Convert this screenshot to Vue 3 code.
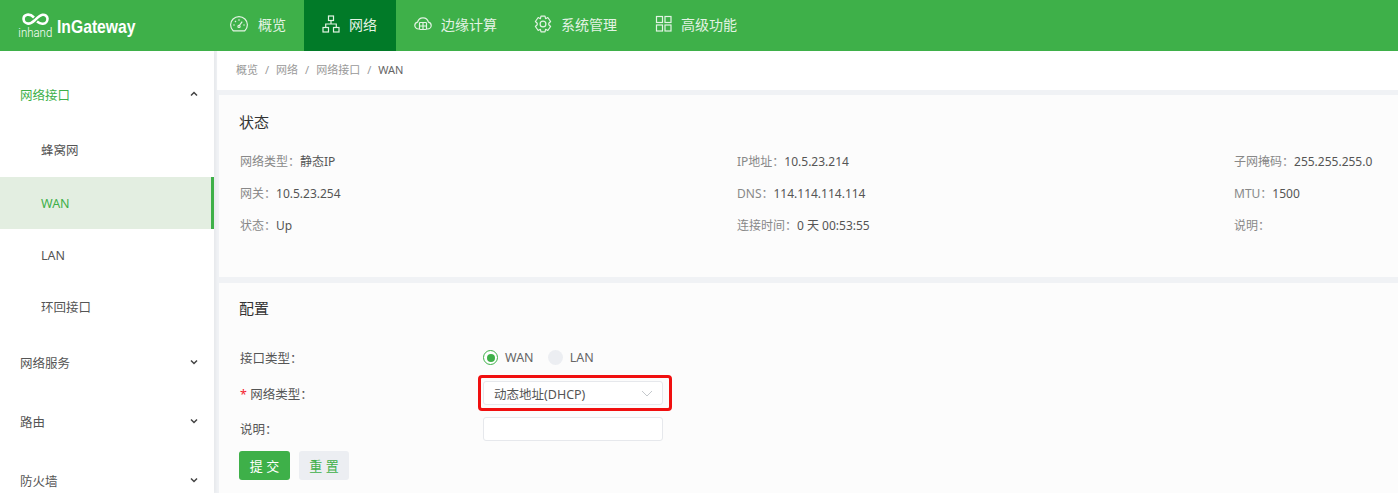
<script setup>
const nav = [
  { label: '概览', icon: 'gauge' },
  { label: '网络', icon: 'net', active: true },
  { label: '边缘计算', icon: 'cloud' },
  { label: '系统管理', icon: 'gear' },
  { label: '高级功能', icon: 'grid' },
]

const subItems = [
  { label: '蜂窝网' },
  { label: 'WAN', active: true },
  { label: 'LAN' },
  { label: '环回接口' },
]

const groups = ['网络服务', '路由', '防火墙']

const status = [
  ['网络类型：', '静态IP'],
  ['IP地址：', '10.5.23.214'],
  ['子网掩码：', '255.255.255.0'],
  ['网关：', '10.5.23.254'],
  ['DNS：', '114.114.114.114'],
  ['MTU：', '1500'],
  ['状态：', 'Up'],
  ['连接时间：', '0 天 00:53:55'],
  ['说明：', ''],
]
</script>

<template>
  <div class="page">
    <header class="top">
      <div class="logo">
        <div class="logo-mark">
          <svg width="27" height="13" viewBox="0 0 27 13" fill="none" stroke="#fff" stroke-width="2.600">
            <path d="M12 4.500 C9.500 2 7 1.400 5 1.800 C2.600 2.300 1.400 4.300 1.600 6.300 C1.800 8.800 4 10.400 6 10.600 C8 10.800 10 9.800 12.500 7.500 C15 5.200 17.500 2.400 20.500 1.800 C23 1.400 25.400 3 25.500 5.600 C25.600 8.200 23.600 10.400 21 10.700 C19 11 17 10.200 15 8.600" />
          </svg>
          <span class="logo-small">inhand</span>
        </div>
        <span class="logo-name">InGateway</span>
      </div>
      <nav class="nav">
        <div v-for="n in nav" :key="n.label" class="nav-item" :class="[n.icon, { active: n.active }]">
          <svg width="18" height="18" viewBox="0 0 18 18" fill="none" stroke="currentColor" stroke-width="1.200">
            <template v-if="n.icon == 'gauge'">
              <path d="M3.200 15.800 C1.600 14.300 .6 12.200 .6 9.800 C.6 5.200 4.400 1.600 9 1.600 C13.600 1.600 17.400 5.200 17.400 9.800 C17.400 12.200 16.400 14.300 14.800 15.800 Z" stroke-linejoin="round" />
              <path d="M9 11 L12.200 6.600 M3.200 10 H4.800 M13.200 10 H14.800 M9 4.200 V5.800 M4.900 5.900 L6 7" />
              <circle cx="9" cy="11.400" r="1.100" />
            </template>
            <template v-else-if="n.icon == 'net'">
              <rect x="6.500" y="1" width="5" height="4.500" />
              <rect x="1" y="12.500" width="5.500" height="4.500" />
              <rect x="11.500" y="12.500" width="5.500" height="4.500" />
              <path d="M9 5.500 V9 M3.700 12.500 V9 H14.300 V12.500" />
            </template>
            <template v-else-if="n.icon == 'cloud'">
              <path d="M5 14 H4.500 C2.300 14 .8 12.300 .8 10.500 C.8 8.700 2 7.400 3.600 7.100 C4.200 4.500 6.400 2.800 9 2.800 C11.600 2.800 13.800 4.500 14.400 7.100 C16 7.400 17.200 8.700 17.200 10.500 C17.200 12.300 15.700 14 13.500 14 H13" />
              <rect x="5.500" y="7.500" width="7" height="7" rx=".8" />
              <path d="M5.500 11 H12.500 M9 7.500 V14.500" />
            </template>
            <template v-else-if="n.icon == 'gear'">
              <path d="M7 1.200 H11 L11.600 3.700 L13.800 2.500 L16.600 6.500 L14.800 8.200 V9.800 L16.600 11.500 L13.800 15.500 L11.600 14.300 L11 16.800 H7 L6.400 14.300 L4.200 15.500 L1.400 11.500 L3.200 9.800 V8.200 L1.400 6.500 L4.200 2.500 L6.400 3.700 Z" stroke-linejoin="round" />
              <circle cx="9" cy="9" r="2.900" />
            </template>
            <template v-else>
              <rect x="2.500" y="1.500" width="6" height="6" />
              <rect x="11" y="1.500" width="6" height="6" />
              <rect x="2.500" y="10" width="6" height="6" />
              <rect x="11" y="10" width="6" height="6" />
            </template>
          </svg>
          <span>{{ n.label }}</span>
        </div>
      </nav>
    </header>

    <div class="body">
      <aside class="side">
        <div class="group open">
          <span>网络接口</span>
          <svg class="chev" width="8" height="6" viewBox="0 0 8 6" fill="none" stroke="#444" stroke-width="1.500"><path d="M1 4.500 L4 1.500 L7 4.500" /></svg>
        </div>
        <div v-for="s in subItems" :key="s.label" class="sub" :class="{ active: s.active }">{{ s.label }}</div>
        <div v-for="g in groups" :key="g" class="group">
          <span>{{ g }}</span>
          <svg class="chev" width="8" height="6" viewBox="0 0 8 6" fill="none" stroke="#444" stroke-width="1.500"><path d="M1 1.500 L4 4.500 L7 1.500" /></svg>
        </div>
      </aside>

      <main class="main">
        <div class="crumbs">
          <span>概览</span><i>/</i><span>网络</span><i>/</i><span>网络接口</span><i>/</i><span class="last">WAN</span>
        </div>

        <section class="card status">
          <h3>状态</h3>
          <div class="status-grid">
            <div v-for="s in status" :key="s[0]" class="cell">
              <span class="k">{{ s[0] }}</span><span class="v">{{ s[1] }}</span>
            </div>
          </div>
        </section>

        <section class="card config">
          <h3>配置</h3>
          <div class="row first">
            <label>接口类型：</label>
            <div class="radios">
              <span class="radio on"></span><span class="radio-text">WAN</span>
              <span class="radio"></span><span class="radio-text">LAN</span>
            </div>
          </div>
          <div class="row">
            <label><em>*</em> 网络类型：</label>
            <div class="select">
              <span>动态地址(DHCP)</span>
              <svg width="12" height="7" viewBox="0 0 12 7" fill="none" stroke="#c4c8cc" stroke-width="1"><path d="M1 1 L6 6 L11 1" /></svg>
              <div class="mark"></div>
            </div>
          </div>
          <div class="row">
            <label>说明：</label>
            <div class="input"></div>
          </div>
          <div class="buttons">
            <button class="btn primary">提 交</button>
            <button class="btn plain">重 置</button>
          </div>
        </section>
      </main>
    </div>
  </div>
</template>

<style>
html, body {
  margin: 0;
  overflow: hidden;
}
</style>

<style scoped>
.page {
  width: 1398px;
  height: 493px;
  overflow: hidden;
  background: #f0f2f5;
  font-family: "Noto Sans", "Noto Sans CJK SC", sans-serif;
  font-size: 12px;
  color: #555;
}

.top {
  height: 51px;
  background: #3eb049;
  display: flex;
  position: relative;
  z-index: 2;
}

.logo {
  width: 229px;
  box-sizing: border-box;
  padding: 13px 0 0 19px;
  display: flex;
  color: #fff;
}

.logo-mark {
  width: 33px;
  display: flex;
  flex-direction: column;
  align-items: center;
  margin-right: 1px;
}

.logo-small {
  font-family: "Roboto", sans-serif;
  font-weight: 300;
  font-size: 13px;
  line-height: 12px;
  margin-top: 1px;
  transform: scaleX(.88);
}

.logo-name {
  font-family: "Liberation Sans", sans-serif;
  font-weight: bold;
  font-size: 19px;
  line-height: 27px;
  margin-left: 4px;
  transform: scaleX(.826);
  transform-origin: left center;
}

.nav {
  display: flex;
}

.nav-item {
  display: flex;
  align-items: center;
  gap: 9px;
  padding: 0 18px 3px 1px;
  box-sizing: border-box;
  color: #e3f3e4;
  font-size: 14px;
  margin-right: 18px;
}

.nav-item.gauge {
  gap: 10px;
  margin-right: 0;
  width: 75px;
}

.nav-item.active {
  background: #017a28;
  padding: 0 18px 3px;
  width: 92px;
  margin-right: 17px;
}

.side {
  width: 214px;
  flex: none;
  background: #fff;
  padding-top: 18px;
  box-shadow: 2px 0 3px rgba(0, 0, 0, .04);
  position: relative;
  font-size: 12.500px;
}

.body {
  display: flex;
  height: 442px;
}

.group {
  height: 52px;
  margin-bottom: 7px;
  padding: 0 16px 0 20px;
  display: flex;
  align-items: center;
  justify-content: space-between;
  color: #555;
}

.group.open {
  height: 50px;
  margin-bottom: 5px;
  color: #3eb049;
}

.sub {
  height: 52px;
  line-height: 54px;
  padding-left: 41px;
  box-sizing: border-box;
  color: #555;
}

.sub.active {
  margin-top: 1px;
  background: #e3eee1;
  color: #3eb049;
  border-right: 3px solid #3eb049;
}

.sub:nth-child(5) {
  margin-bottom: 3px;
}

.main {
  flex: 1;
  min-width: 0;
  margin-left: 3px;
}

.crumbs {
  height: 39px;
  box-sizing: border-box;
  padding: 0 0 3px 19px;
  background: #fff;
  display: flex;
  align-items: center;
  font-size: 11px;
  color: #999;
}

.crumbs i {
  font-style: normal;
  margin: 0 7px;
}

.crumbs .last {
  color: #666;
}

.card {
  background: #fcfcfc;
  margin-left: 2px;
  padding-left: 21px;
}

.card h3 {
  margin: 0 0 0 -1px;
  font-size: 15px;
  font-weight: 400;
  color: #333;
  line-height: 22px;
}

.status {
  margin-top: 5px;
  height: 182px;
  padding-top: 16px;
  box-sizing: border-box;
}

.status-grid {
  display: grid;
  grid-template-columns: repeat(3, 497px);
  grid-auto-rows: 32px;
  margin-top: 13px;
}

.cell {
  line-height: 32px;
  white-space: nowrap;
}

.k {
  color: #888;
}

.v {
  color: #555;
}

.config {
  margin-top: 6px;
  padding-top: 14px;
  height: 210px;
  box-sizing: border-box;
}

.row {
  display: flex;
  align-items: center;
  height: 35.500px;
  font-size: 12.500px;
}

.row.first {
  margin-top: 21px;
}

.row label {
  width: 243px;
  flex: none;
  color: #555;
}

.row em {
  color: #f5222d;
  font-style: normal;
}

.radios {
  display: flex;
  align-items: center;
}

.radio {
  width: 15px;
  height: 15px;
  border-radius: 50%;
  background: #eceef2;
  margin-right: 7px;
  box-sizing: border-box;
}

.radio.on {
  background: #fff;
  border: 1px solid #3eb049;
  position: relative;
}

.radio.on::after {
  content: "";
  position: absolute;
  left: 2.500px;
  top: 2.500px;
  width: 8px;
  height: 8px;
  border-radius: 50%;
  background: #3eb049;
}

.radio-text {
  margin-right: 14px;
  color: #666;
}

.select, .input {
  width: 180px;
  height: 24px;
  box-sizing: border-box;
  background: #fff;
  border: 1px solid #e6e8ec;
  border-radius: 3px;
  position: relative;
}

.select {
  display: flex;
  align-items: center;
  justify-content: space-between;
  padding: 0 9px 0 10px;
  color: #555;
}

.mark {
  position: absolute;
  left: -6px;
  top: -7px;
  width: 194px;
  height: 36px;
  box-sizing: border-box;
  border: 3px solid #f00f0f;
  border-radius: 4px;
}

.buttons {
  display: flex;
  gap: 9px;
  margin: 4px 0 0 -1px;
}

.btn {
  width: 51px;
  height: 29px;
  border: none;
  border-radius: 3px;
  font-family: inherit;
  font-size: 13px;
  padding: 0;
}

.primary {
  background: #3eb049;
  color: #fff;
}

.plain {
  width: 50px;
  background: #eceef2;
  color: #3eb049;
}
</style>
